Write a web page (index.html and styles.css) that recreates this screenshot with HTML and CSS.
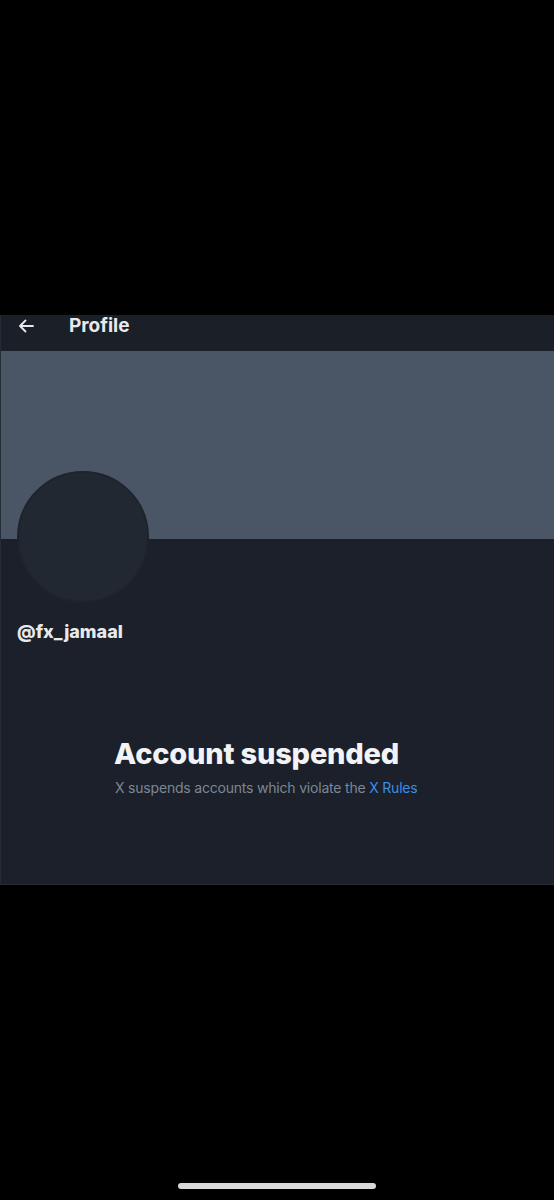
FILE: index.html
```html
<!DOCTYPE html>
<html lang="en">
<head>
<meta charset="utf-8">
<title>Profile</title>
<link rel="stylesheet" href="styles.css">
</head>
<body>
<main class="screen">
  <section class="card">
    <header class="topbar">
      <svg class="back" width="16" height="14" viewBox="0 0 16 14" aria-hidden="true">
        <path d="M15 7H2M7.5 1.5L2 7l5.5 5.5" fill="none" stroke="#e7e9ea" stroke-width="1.8" stroke-linecap="round" stroke-linejoin="round"/>
      </svg>
      <h1 class="title">Profile</h1>
    </header>
    <div class="banner"></div>
    <div class="avatar"></div>
    <p class="handle">@fx_jamaal</p>
    <div class="notice">
      <h2 class="notice-title">Account suspended</h2>
      <p class="notice-text">X suspends accounts which violate the <a class="link" href="#">X Rules</a></p>
    </div>
  </section>
  <div class="home-indicator"></div>
</main>
</body>
</html>
```
FILE: styles.css
```css
html, body {
  margin: 0;
  padding: 0;
  background: #000;
}
body {
  font-family: Inter, "Open Sans", sans-serif;
  width: 554px;
  height: 1200px;
  overflow: hidden;
}
.screen {
  display: flex;
  flex-direction: column;
  align-items: center;
  padding-top: 315px;
}
.card {
  width: 554px;
  height: 570px;
  box-sizing: border-box;
  background: #1b202a;
  border-left: 1px solid #262c36;
  border-bottom: 1px solid #262c36;
  display: flex;
  flex-direction: column;
}
.topbar {
  height: 36px;
  display: flex;
  align-items: flex-start;
  background: #1a1f28;
  padding-left: 17px;
  box-sizing: border-box;
}
.back {
  margin-top: 4px;
  margin-right: 35px;
}
.title {
  margin: 0;
  font-size: 19px;
  line-height: 22px;
  font-weight: 700;
  color: #e7e9ea;
}
.banner {
  height: 188px;
  background: #4a5566;
}
.avatar {
  width: 132px;
  height: 132px;
  box-sizing: border-box;
  border-radius: 50%;
  background: #222831;
  border: 2px solid #1e232c;
  margin-top: -68px;
  margin-left: 16px;
}
.handle {
  margin: 18px 0 0 16px;
  font-size: 18px;
  font-weight: 800;
  color: #e7e9ea;
}
.notice {
  margin-top: 95px;
  padding-left: 113px;
}
.notice-title {
  margin: 0;
  font-size: 29px;
  font-weight: 800;
  color: #f2f3f4;
  letter-spacing: -0.2px;
  line-height: 34px;
}
.notice-text {
  margin: 8px 0 0 1px;
  font-size: 14px;
  letter-spacing: -0.2px;
  color: #7c8794;
  line-height: 18px;
}
.link {
  color: #3b8de5;
  text-decoration: none;
}
.home-indicator {
  width: 198px;
  height: 6px;
  border-radius: 3px;
  background: #d9d9d9;
  margin-top: 298px;
}
```
